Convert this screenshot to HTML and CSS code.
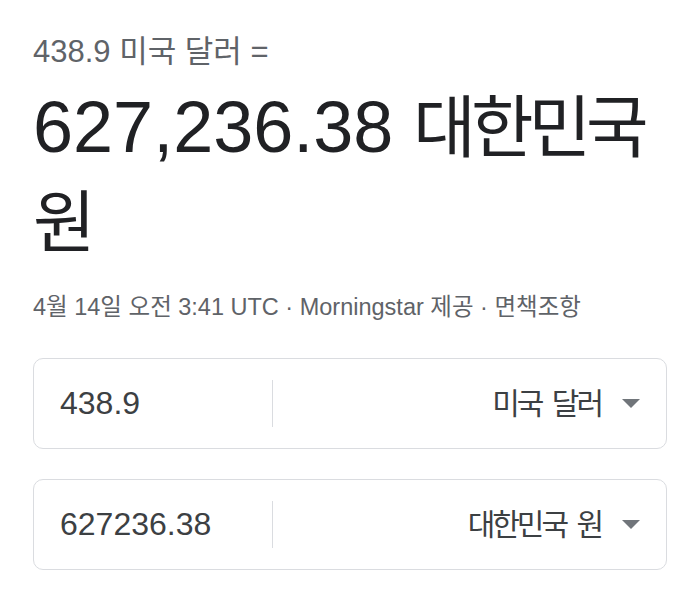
FILE: index.html
```html
<!DOCTYPE html>
<html lang="ko">
<head>
    <meta charset="UTF-8">
    <meta name="viewport" content="width=device-width, initial-scale=1.0">
    <title>환율 변환</title>
    <link rel="stylesheet" href="styles.css">
</head>
<body>

<div class="converter">
    <div class="source">438.9 미국 달러 =</div>
    <div class="target">627,236.38 <span class="ko">대한민국</span> <span class="ko">원</span></div>
    <div class="meta">4월 14일 오전 3:41 UTC · Morningstar 제공 · 면책조항</div>

    <div class="field">
        <div class="amount">438.9</div>
        <div class="unit">
            <span class="ko">미국 달러</span>
            <svg class="arrow" width="18" height="9" viewBox="0 0 18 9"><polygon points="0,0 18,0 9,9" fill="#70757a"/></svg>
        </div>
    </div>

    <div class="field">
        <div class="amount">627236.38</div>
        <div class="unit">
            <span class="ko">대한민국 원</span>
            <svg class="arrow" width="18" height="9" viewBox="0 0 18 9"><polygon points="0,0 18,0 9,9" fill="#70757a"/></svg>
        </div>
    </div>
</div>

</body>
</html>
```

FILE: styles.css
```css
body {
    margin: 0;
    background-color: #fff;
    font-family: "Liberation Sans", Arial, "Noto Sans CJK KR", sans-serif;
    color: #202124;
}
.converter {
    padding: 34px 19px 0 33px;
}
.source {
    font-size: 31px;
    line-height: 36px;
    color: #5f6368;
}
.target {
    margin-top: 10px;
    font-size: 72px;
    line-height: 95px;
    color: #202124;
}
.target .ko {
    font-size: 68px;
    line-height: 1;
    letter-spacing: -5px;
}
.meta {
    margin-top: 22px;
    font-size: 23.5px;
    line-height: 30px;
    color: #5f6368;
}
.field {
    display: flex;
    align-items: center;
    height: 89px;
    margin-top: 36px;
    border: 1px solid #dadce0;
    border-radius: 10px;
}
.field + .field {
    margin-top: 30px;
}
.amount {
    width: 239px;
    box-sizing: border-box;
    height: 47px;
    line-height: 47px;
    padding-left: 26px;
    border-right: 1px solid #dadce0;
    font-size: 32px;
    color: #3c4043;
}
.unit {
    flex: 1;
    display: flex;
    justify-content: flex-end;
    align-items: center;
    gap: 21px;
    padding-right: 26px;
}
.unit .ko {
    font-size: 30px;
    line-height: 1;
    letter-spacing: -3px;
    word-spacing: 5px;
    color: #3c4043;
}
.arrow {
    display: block;
}
```
